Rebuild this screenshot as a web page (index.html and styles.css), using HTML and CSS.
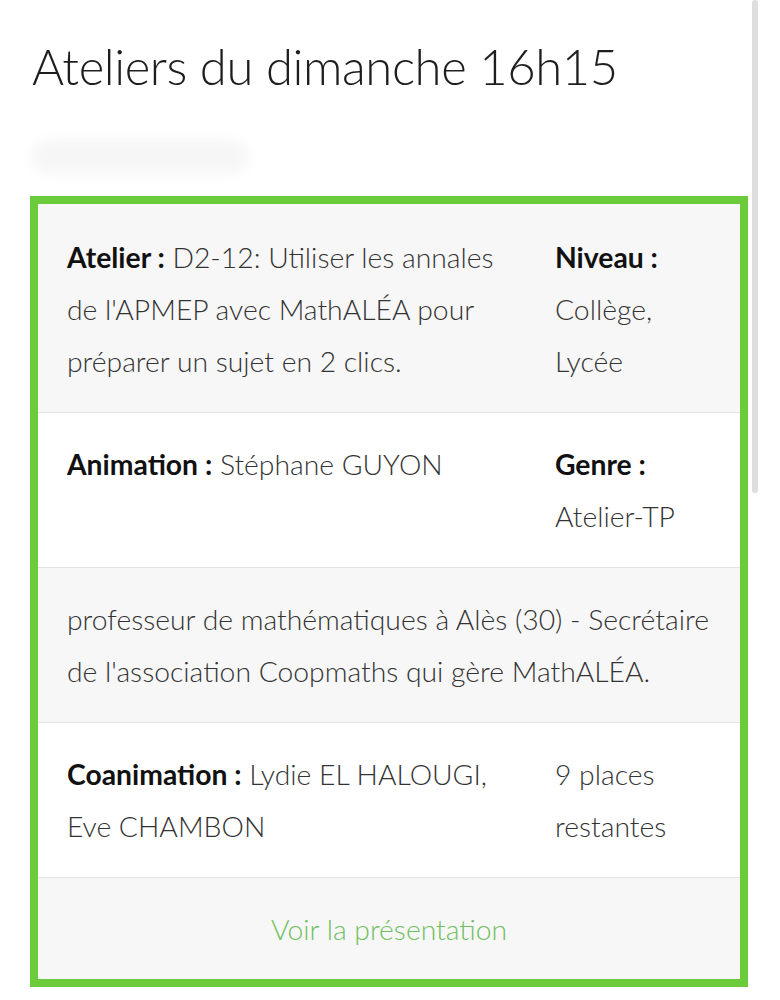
FILE: index.html
```html
<!DOCTYPE html>
<html lang="fr">
<head>
<meta charset="utf-8">
<title>Ateliers du dimanche 16h15</title>
<link rel="stylesheet" href="styles.css">
</head>
<body>
<div class="page">
  <h1 class="title">Ateliers du dimanche 16h15</h1>
  <div class="smudge"></div>
  <div class="card">
    <div class="row alt">
      <div class="main"><b>Atelier :</b> D2-12: Utiliser les annales de l'APMEP avec MathALÉA pour préparer un sujet en 2 clics.</div>
      <div class="side"><b>Niveau :</b><br>Collège, Lycée</div>
    </div>
    <div class="row">
      <div class="main"><b>Animation :</b> Stéphane GUYON</div>
      <div class="side"><b>Genre :</b><br>Atelier-TP</div>
    </div>
    <div class="row alt">
      <div class="full">professeur de mathématiques à Alès (30) - Secrétaire de l'association Coopmaths qui gère MathALÉA.</div>
    </div>
    <div class="row">
      <div class="main"><b>Coanimation :</b> Lydie EL HALOUGI, Eve CHAMBON</div>
      <div class="side">9 places restantes</div>
    </div>
    <div class="row alt link-row">
      <a class="link" href="#">Voir la présentation</a>
    </div>
  </div>
</div>
<div class="scrollbar"></div>
</body>
</html>
```

FILE: styles.css
```css
html, body {
  margin: 0;
  padding: 0;
  background: #ffffff;
}
body {
  font-family: "Lato", "Liberation Sans", sans-serif;
  color: #333333;
}
.page {
  padding: 0 32px 0 30px;
  width: 718px;
}
.title {
  margin: 0;
  padding: 37px 0 0 2px;
  font-weight: 300;
  font-size: 49px;
  line-height: 58px;
  color: #1e1e1e;
  letter-spacing: -0.4px;
}
.smudge {
  margin: 45px 0 0 2px;
  width: 216px;
  height: 34px;
  border-radius: 18px;
  background: #f6f6f6;
  filter: blur(6px);
}
.card {
  margin-top: 22px;
  border: 8px solid #6ccb3b;
  background: #ffffff;
}
.row {
  display: grid;
  grid-template-columns: 428px 156px;
  column-gap: 60px;
  padding: 25px 29px 25px 29px;
  font-size: 28.3px;
  line-height: 52px;
  font-weight: 300;
  color: #333;
  border-top: 1px solid #e3e3e3;
}
.row:first-child {
  border-top: none;
  padding-top: 27px;
}
.row.alt {
  background: #f7f7f7;
}
.row b {
  font-weight: 700;
  color: #111;
}
.full {
  grid-column: 1 / 3;
}
.link-row {
  display: block;
  text-align: center;
  padding: 25px 29px 24px;
}
.link {
  color: #6fbf5f;
  text-decoration: none;
}
.scrollbar {
  position: absolute;
  top: 0;
  left: 752px;
  width: 6px;
  height: 493px;
  border-radius: 3px;
  background: #dedede;
}
```
